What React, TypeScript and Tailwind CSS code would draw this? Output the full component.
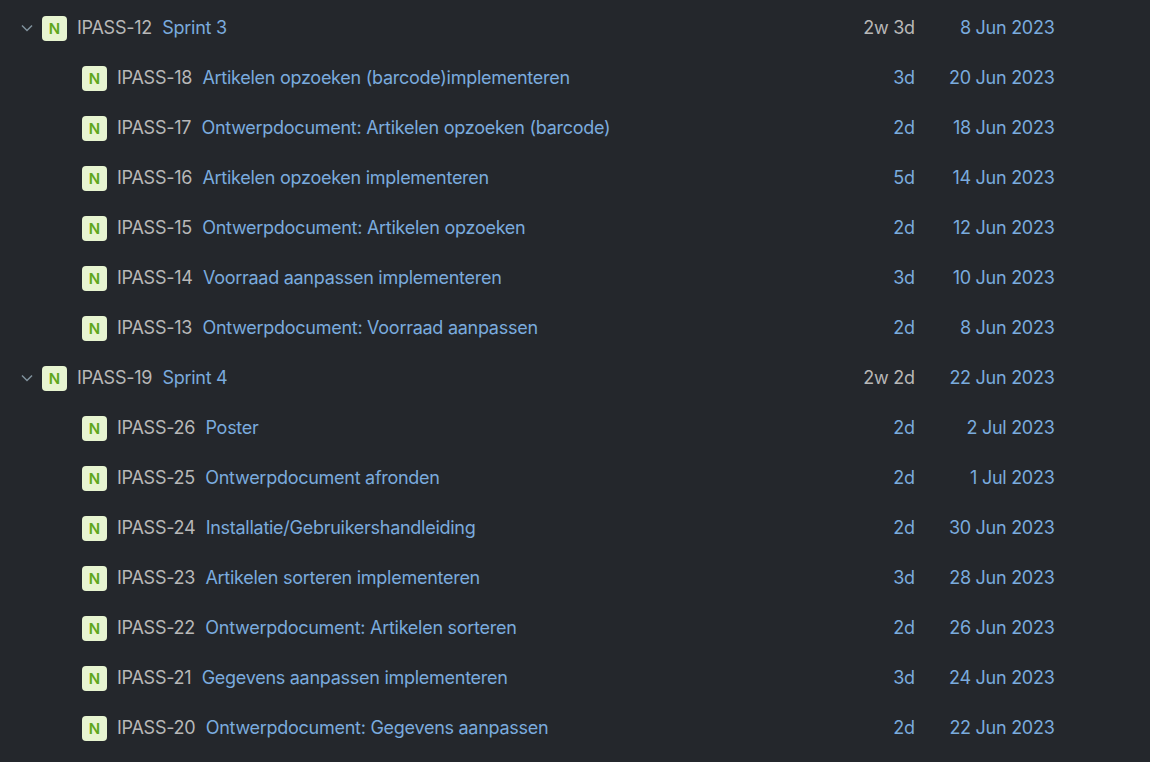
type Issue = { id: string; title: string; estimate: string; date: string; parent?: boolean };

const issues: Issue[] = [
  { id: "IPASS-12", title: "Sprint 3", estimate: "2w 3d", date: "8 Jun 2023", parent: true },
  { id: "IPASS-18", title: "Artikelen opzoeken (barcode)implementeren", estimate: "3d", date: "20 Jun 2023" },
  { id: "IPASS-17", title: "Ontwerpdocument: Artikelen opzoeken (barcode)", estimate: "2d", date: "18 Jun 2023" },
  { id: "IPASS-16", title: "Artikelen opzoeken implementeren", estimate: "5d", date: "14 Jun 2023" },
  { id: "IPASS-15", title: "Ontwerpdocument: Artikelen opzoeken", estimate: "2d", date: "12 Jun 2023" },
  { id: "IPASS-14", title: "Voorraad aanpassen implementeren", estimate: "3d", date: "10 Jun 2023" },
  { id: "IPASS-13", title: "Ontwerpdocument: Voorraad aanpassen", estimate: "2d", date: "8 Jun 2023" },
  { id: "IPASS-19", title: "Sprint 4", estimate: "2w 2d", date: "22 Jun 2023", parent: true },
  { id: "IPASS-26", title: "Poster", estimate: "2d", date: "2 Jul 2023" },
  { id: "IPASS-25", title: "Ontwerpdocument afronden", estimate: "2d", date: "1 Jul 2023" },
  { id: "IPASS-24", title: "Installatie/Gebruikershandleiding", estimate: "2d", date: "30 Jun 2023" },
  { id: "IPASS-23", title: "Artikelen sorteren implementeren", estimate: "3d", date: "28 Jun 2023" },
  { id: "IPASS-22", title: "Ontwerpdocument: Artikelen sorteren", estimate: "2d", date: "26 Jun 2023" },
  { id: "IPASS-21", title: "Gegevens aanpassen implementeren", estimate: "3d", date: "24 Jun 2023" },
  { id: "IPASS-20", title: "Ontwerpdocument: Gegevens aanpassen", estimate: "2d", date: "22 Jun 2023" },
];

function Row({ issue }: { issue: Issue }) {
  return (
    <li className={`flex h-[50px] items-center ${issue.parent ? "pl-[21px]" : "pl-[82px]"}`}>
      {issue.parent && (
        <svg className="mt-px mr-[9px] h-3 w-3 text-[#80919d]" viewBox="0 0 12 12" fill="none" stroke="currentColor" strokeWidth="1.5">
          <path d="M1 3.5 6 8.5l5-5" />
        </svg>
      )}
      <span className="mt-[2px] flex h-[25px] w-[25px] items-center justify-center rounded-[4px] bg-[#e7f4d0] text-[15px] font-semibold tracking-normal text-[#5ea71a]">
        N
      </span>
      <span className="ml-[10px] text-[#b8b8b8]">{issue.id}</span>
      <span className="ml-[10.3px] text-[#7aabde]">{issue.title}</span>
      <span className={`ml-auto ${issue.parent ? "text-[#b8b8b8]" : "text-[#7aabde]"}`}>{issue.estimate}</span>
      <span className="mr-[95.5px] w-[139.75px] text-right text-[#7aabde]">{issue.date}</span>
    </li>
  );
}

export default function App() {
  return (
    <main className="h-[762px] overflow-hidden bg-[#24272c] pt-[2.5px] font-['Inter',sans-serif] text-[18px] leading-[25px] tracking-[-0.27px] whitespace-nowrap">
      <ul>
        {issues.map((issue) => (
          <Row key={issue.id} issue={issue} />
        ))}
      </ul>
    </main>
  );
}
